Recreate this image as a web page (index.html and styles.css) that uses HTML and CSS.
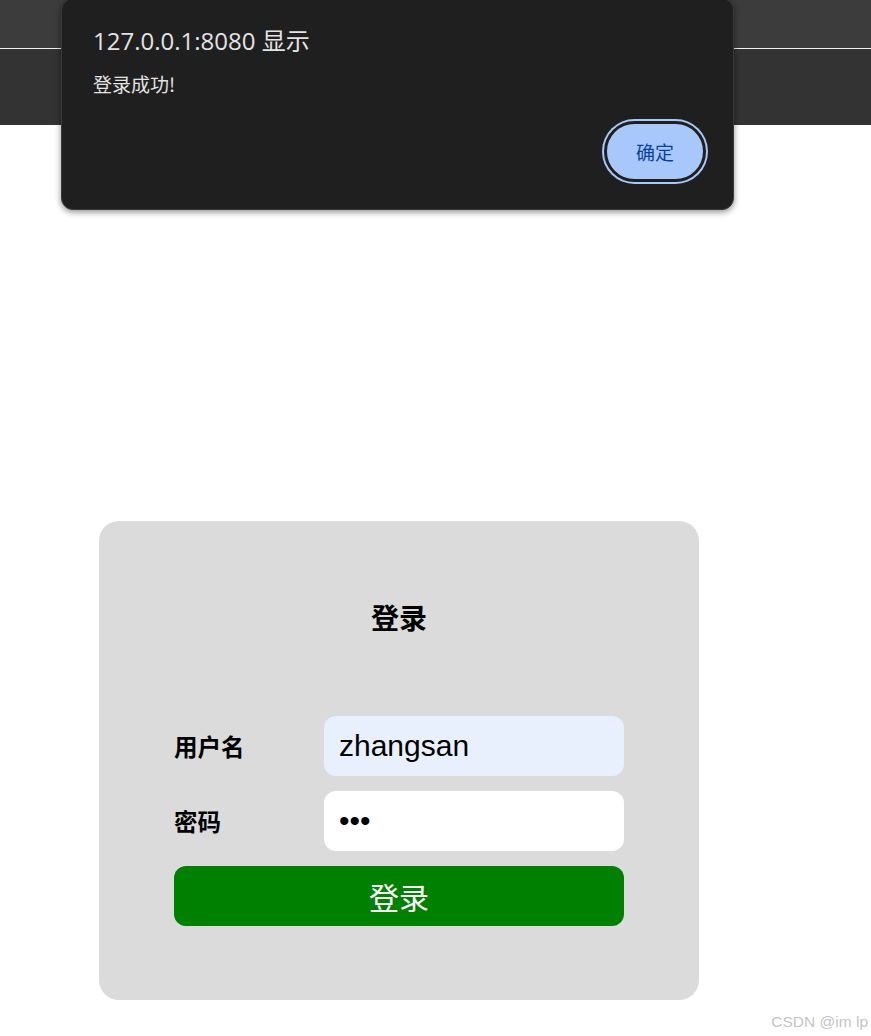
FILE: index.html
```html
<!DOCTYPE html>
<html lang="zh-CN">
<head>
<meta charset="utf-8">
<title>登录</title>
<link rel="stylesheet" href="styles.css">
</head>
<body>
  <div class="chrome">
    <div class="chrome-tabs"></div>
    <div class="chrome-line"></div>
    <div class="chrome-toolbar"></div>
  </div>

  <main class="page">
    <form class="card">
      <h2 class="card-title">登录</h2>
      <div class="row">
        <label class="label" for="u">用户名</label>
        <input class="field field-filled" id="u" type="text" value="zhangsan">
      </div>
      <div class="row">
        <label class="label" for="p">密码</label>
        <input class="field" id="p" type="password" value="123">
      </div>
      <button class="submit" type="button">登录</button>
    </form>
  </main>

  <div class="dialog">
    <div class="dialog-title">127.0.0.1:8080 显示</div>
    <div class="dialog-msg">登录成功!</div>
    <div class="dialog-actions">
      <button class="dialog-btn" type="button">确定</button>
    </div>
  </div>

  <div class="watermark">CSDN @im lp</div>
</body>
</html>
```

FILE: styles.css
```css
html, body {
  margin: 0;
  padding: 0;
}
body {
  background: #ffffff;
  font-family: "Liberation Sans", "Noto Sans CJK SC", sans-serif;
  position: relative;
  min-height: 1036px;
  overflow: hidden;
}

.chrome {
  display: flex;
  flex-direction: column;
}
.chrome-tabs {
  height: 48px;
  background: #3c3c3c;
}
.chrome-line {
  height: 1px;
  background: #f2f2f2;
}
.chrome-toolbar {
  height: 76px;
  background: #333333;
}

.page {
  padding: 396px 0 0 99px;
}

.card {
  width: 450px;
  padding: 80px 75px 74px;
  background: #dbdbdb;
  border-radius: 20px;
  display: flex;
  flex-direction: column;
  gap: 15px;
}
.card-title {
  margin: 0 0 68px;
  text-align: center;
  font-family: "Noto Sans CJK SC", sans-serif;
  font-size: 28px;
  line-height: 32px;
  font-weight: 700;
  color: #000;
}
.row {
  display: flex;
  align-items: center;
}
.label {
  width: 150px;
  font-family: "Noto Sans CJK SC", sans-serif;
  font-size: 23.5px;
  font-weight: 700;
  color: #000;
}
.field {
  box-sizing: border-box;
  width: 300px;
  height: 60px;
  border: none;
  outline: none;
  border-radius: 12px;
  background: #ffffff;
  padding: 0 15px;
  font-family: "Liberation Sans", sans-serif;
  font-size: 30px;
  color: #000;
}
.field-filled {
  background: #e8f0fe;
}
.submit {
  width: 450px;
  height: 60px;
  border: none;
  border-radius: 12px;
  background: #008000;
  color: #ffffff;
  font-family: "Noto Sans CJK SC", sans-serif;
  font-size: 30px;
  padding: 0;
}

.dialog {
  position: absolute;
  left: 61px;
  top: -2px;
  width: 673px;
  box-sizing: border-box;
  padding: 27px 25px 25px 31px;
  background: #1f1f1f;
  border: 1px solid #3a3a3a;
  border-radius: 12px;
  box-shadow: 0 2px 6px rgba(0, 0, 0, 0.45);
  display: flex;
  flex-direction: column;
  color: #e3e3e3;
}
.dialog-title {
  font-family: "Open Sans", "Noto Sans CJK SC", sans-serif;
  font-size: 24px;
  line-height: 30px;
}
.dialog-msg {
  margin-top: 16px;
  font-family: "Noto Sans CJK SC", sans-serif;
  font-size: 19px;
  line-height: 24px;
}
.dialog-actions {
  margin-top: 23px;
  display: flex;
  justify-content: flex-end;
}
.dialog-btn {
  margin: 2px;
  width: 102px;
  height: 61px;
  box-sizing: border-box;
  border: 3px solid #1f1f1f;
  border-radius: 31px;
  background: #a8c7fa;
  box-shadow: 0 0 0 2px #a8c7fa;
  color: #0842a0;
  font-family: "Noto Sans CJK SC", sans-serif;
  font-size: 19px;
  padding: 0;
}

.watermark {
  position: absolute;
  right: 3px;
  bottom: 5px;
  font-family: "Liberation Sans", sans-serif;
  font-size: 15.5px;
  color: #c4c4c4;
}
```
